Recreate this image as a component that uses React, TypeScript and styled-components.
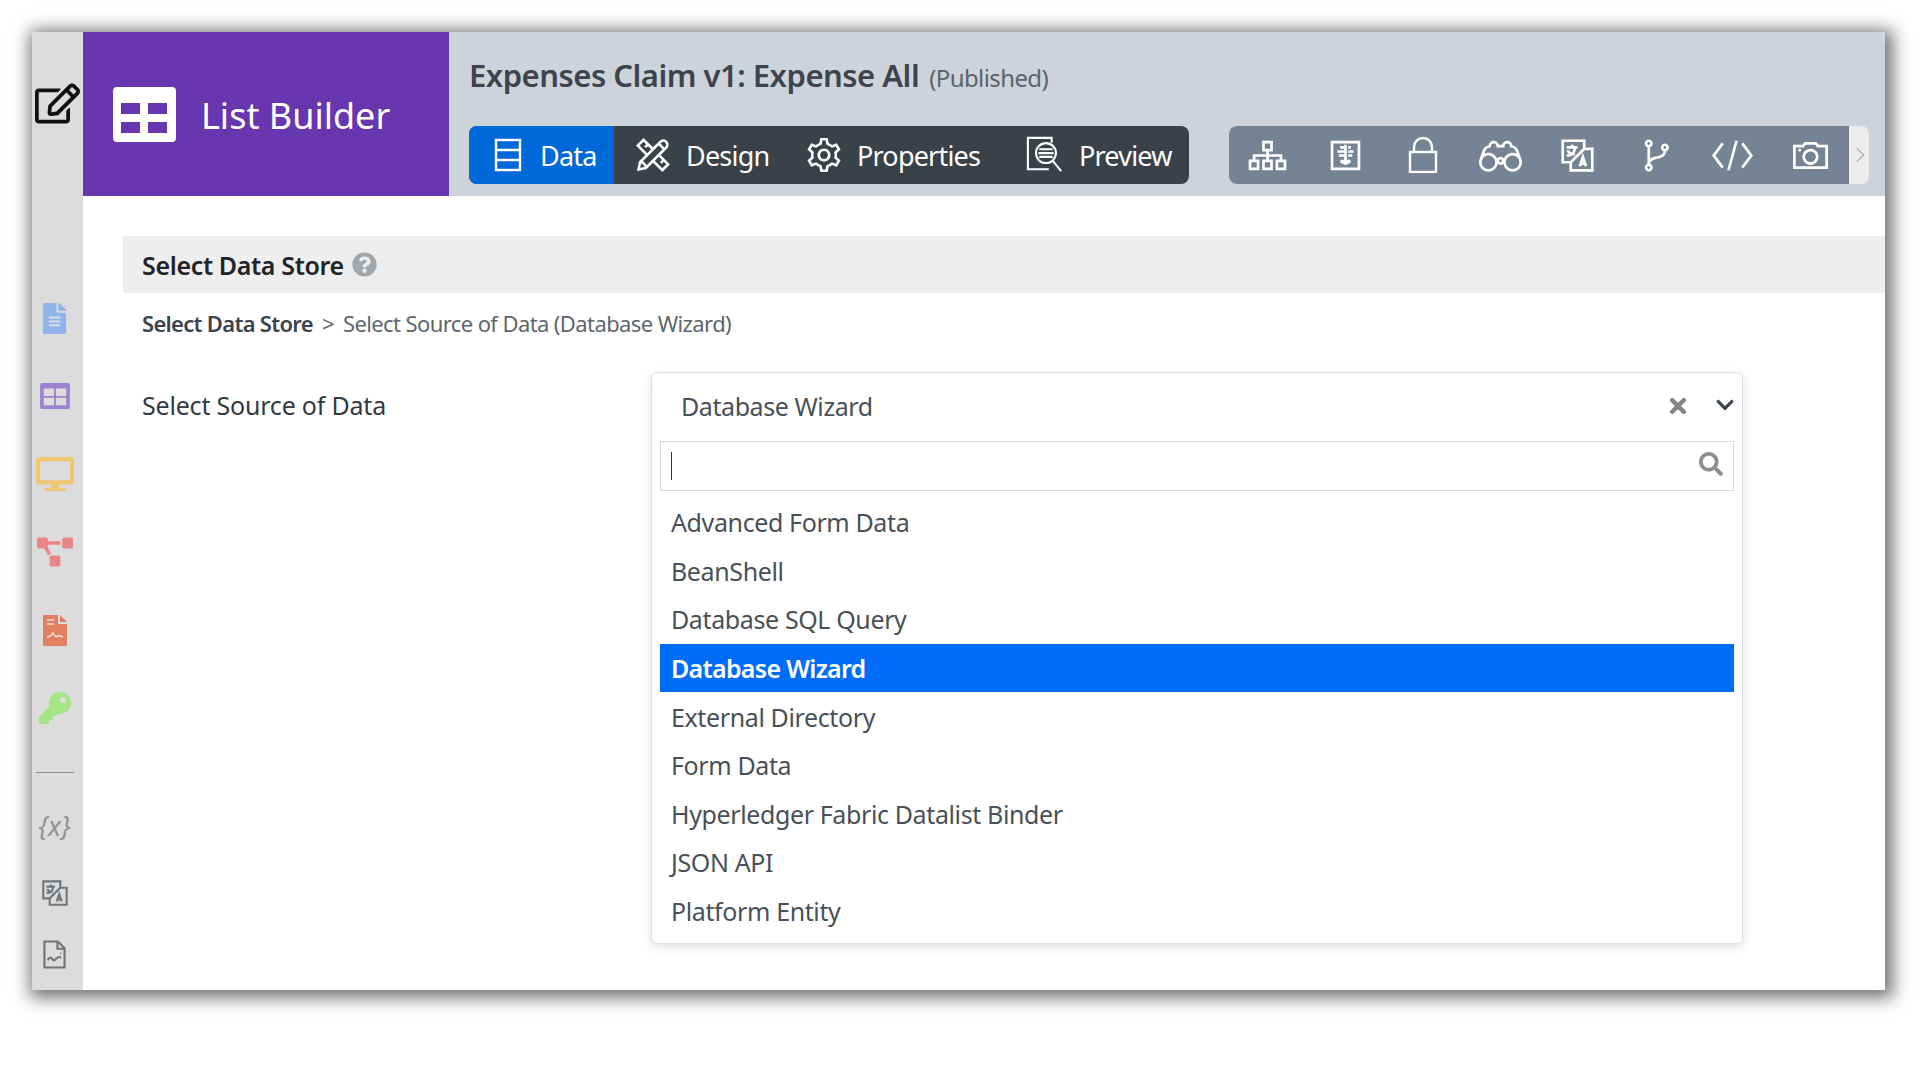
import React from 'react';
import styled, { createGlobalStyle } from 'styled-components';
import { FaFileAlt, FaKey, FaDesktop, FaProjectDiagram, FaQuestionCircle, FaChevronDown, FaTimes, FaSearch, FaRegEdit } from 'react-icons/fa';
import {
    LiaPencilRulerSolid, LiaCogSolid, LiaSitemapSolid, LiaXRaySolid, LiaBinocularsSolid,
    LiaLanguageSolid, LiaCodeBranchSolid, LiaCodeSolid, LiaCameraSolid, LiaAngleRightSolid
} from 'react-icons/lia';

const GlobalStyle = createGlobalStyle`
  html, body {
    margin: 0;
    padding: 0;
    background: #fff;
    font-family: "Noto Sans", "Open Sans", sans-serif;
  }
  * { box-sizing: border-box; }
`;

const Page = styled.div`
  width: 1920px;
  height: 1080px;
  padding: 32px 35px 90px 32px;
  overflow: hidden;
`;

const Window = styled.div`
  display: grid;
  grid-template-columns: 51px 1fr;
  height: 958px;
  background: #fff;
  box-shadow: 3px 3px 16px 5px rgba(0, 0, 0, 0.55);
`;

const Rail = styled.div`
  display: flex;
  flex-direction: column;
  align-items: center;
  background: #dcdcdc;
  padding: 49px 6px 0 0;
  min-height: 0;
`;

const RailEdit = styled.div`
  display: flex;
  align-items: center;
  height: 44px;
  margin: 0 0 171px 5px;
  font-size: 45px;
  color: #111;
`;

const RailItem = styled.div<{ $color: string; $size?: number; $gap?: number }>`
  display: flex;
  align-items: center;
  justify-content: center;
  height: 44px;
  margin-bottom: ${p => (p.$gap === undefined ? 34 : p.$gap)}px;
  color: ${p => p.$color};
  font-size: ${p => p.$size || 30}px;
`;

const RailRule = styled.div`
  width: 38px;
  height: 1px;
  background: #8a8d90;
  margin: 8px 0 30px;
`;

const RailVar = styled(RailItem)`
  font-style: italic;
  font-size: 27px;
  font-family: "Noto Sans", sans-serif;
`;

const Main = styled.div`
  display: flex;
  flex-direction: column;
  min-width: 0;
`;

const Header = styled.div`
  display: flex;
  height: 164px;
  background: #ccd3da;
`;

const Brand = styled.div`
  display: flex;
  flex: none;
  align-items: center;
  width: 366px;
  padding-left: 30px;
  gap: 25px;
  background: #6836ae;
  color: #fff;
  font-size: 36px;
`;

const BrandLogo = styled.svg`
  width: 63px;
  height: 55px;
`;

const BrandName = styled.span`
  padding-top: 2px;
`;

const HeaderBody = styled.div`
  flex: 1;
  min-width: 0;
  padding: 22px 0 0 20px;
`;

const Title = styled.div`
  display: flex;
  align-items: baseline;
  height: 47px;
  gap: 10px;
  font-size: 31px;
  font-weight: 600;
  color: #3d444b;
  letter-spacing: -0.5px;
`;

const TitleStatus = styled.span`
  font-size: 24px;
  font-weight: 400;
  color: #5b636b;
  letter-spacing: -0.6px;
`;

const Toolbars = styled.div`
  display: flex;
  margin-top: 25px;
  gap: 40px;
`;

const Tabs = styled.div`
  display: flex;
  flex: none;
  width: 720px;
  height: 58px;
  border-radius: 8px;
  background: #3a4249;
  overflow: hidden;
`;

const Tab = styled.div<{ $active?: boolean; $width: number; $pad: number; $gap: number }>`
  display: flex;
  align-items: center;
  flex: none;
  width: ${p => p.$width}px;
  padding-left: ${p => p.$pad}px;
  gap: ${p => p.$gap}px;
  background: ${p => (p.$active ? '#0069d9' : 'transparent')};
  color: #fff;
  font-size: 27px;
  letter-spacing: -0.8px;
  svg { flex: none; }
`;

const Tools = styled.div`
  display: flex;
  flex: none;
  width: 640px;
  height: 58px;
  border-radius: 8px;
  background: #ededed;
  overflow: hidden;
`;

const ToolList = styled.div`
  display: grid;
  grid-template-columns: repeat(8, 1fr);
  align-items: center;
  justify-items: center;
  width: 620px;
  background: #748494;
  color: #fff;
  font-size: 43px;
`;

const ToolMore = styled.div`
  display: flex;
  flex: 1;
  align-items: center;
  justify-content: center;
  color: #a9adb1;
  font-size: 20px;
`;

const Content = styled.div`
  flex: 1;
  padding: 40px 0 0 40px;
`;

const SectionBar = styled.div`
  display: flex;
  align-items: center;
  height: 57px;
  padding-left: 19px;
  gap: 8px;
  background: #eee;
  color: #212529;
  font-size: 25px;
  font-weight: 600;
  letter-spacing: -0.35px;
  svg { color: #a2a7ac; font-size: 25px; }
`;

const Crumbs = styled.div`
  padding: 15px 0 0 19px;
  height: 79px;
  color: #5e666d;
  font-size: 22px;
  letter-spacing: -0.6px;
  b { color: #3d444b; font-weight: 600; letter-spacing: -0.7px; }
`;

const CrumbSep = styled.span`
  margin: 0 9px;
`;

const Field = styled.div`
  display: flex;
  padding-left: 19px;
`;

const FieldLabel = styled.div`
  width: 509px;
  padding-top: 16px;
  color: #343a40;
  font-size: 25px;
  letter-spacing: -0.2px;
`;

const Select = styled.div`
  width: 1092px;
  height: 572px;
  background: #fff;
  border: 1px solid #dce1e6;
  border-radius: 6px;
  box-shadow: 0 3px 10px rgba(60, 70, 90, 0.16);
`;

const SelectHead = styled.div`
  display: flex;
  align-items: center;
  height: 68px;
  padding: 0 7px 3px 29px;
  color: #495057;
  font-size: 25px;
  letter-spacing: -0.42px;
`;

const SelectValue = styled.span`
  flex: 1;
`;

const Clear = styled.span`
  display: flex;
  margin-right: 25px;
  color: #808488;
  font-size: 24px;
`;

const Caret = styled.span`
  display: flex;
  margin-bottom: 2px;
  color: #3d454d;
  font-size: 20px;
`;

const SearchBox = styled.div`
  display: flex;
  align-items: center;
  justify-content: space-between;
  height: 50px;
  margin: 0 8px 7px 8px;
  padding: 0 10px 4px 10px;
  border: 1px solid #d5dae0;
  color: #8c8f92;
  font-size: 24px;
`;

const Cursor = styled.div`
  width: 1px;
  height: 28px;
  margin-top: 4px;
  background: #333;
`;

const Options = styled.div`
  margin: 0 8px;
`;

const Option = styled.div<{ $selected?: boolean }>`
  display: flex;
  align-items: center;
  height: 48.6px;
  padding-left: 11px;
  background: ${p => (p.$selected ? '#006cfa' : 'transparent')};
  color: ${p => (p.$selected ? '#fff' : '#495057')};
  font-size: 25px;
  font-weight: ${p => (p.$selected ? 600 : 400)};
  letter-spacing: ${p => (p.$selected ? '-0.7px' : '-0.38px')};
`;

const options = ['Advanced Form Data', 'BeanShell', 'Database SQL Query', 'Database Wizard', 'External Directory', 'Form Data', 'Hyperledger Fabric Datalist Binder', 'JSON API', 'Platform Entity'];

const GridIcon = ({ color }: { color: string }) => (
    <svg width="32" height="28" viewBox="0 0 34 30">
        <path fill={color} fillRule="evenodd" d="M3 1h28a2 2 0 0 1 2 2v24a2 2 0 0 1-2 2H3a2 2 0 0 1-2-2V3a2 2 0 0 1 2-2zM5 7v8h11V7zM18 7v8h11V7zM5 17v8h11v-8zM18 17v8h11v-8z"/>
    </svg>
);

const DataIcon = () => (
    <svg width="28" height="34" viewBox="0 0 28 34" fill="none" stroke="#fff" strokeWidth="2.4">
        <rect x="2" y="2" width="24" height="30"/>
        <path d="M2 12h24M2 22h24"/>
    </svg>
);

const PreviewIcon = () => (
    <svg width="38" height="38" viewBox="0 0 40 38" fill="none" stroke="#fff" strokeWidth="2.2">
        <path d="M27 6V1H2v33h22"/>
        <circle cx="21" cy="17" r="10.5"/>
        <path d="M14 13h14M13 17h16M14 21h14M28 25l9 11"/>
    </svg>
);

const LockIcon = () => (
    <svg width="34" height="36" viewBox="0 0 34 36" fill="none" stroke="#fff" strokeWidth="2.4">
        <rect x="4" y="15" width="26" height="20"/>
        <path d="M8 15V10a9 9 0 0 1 18 0v5"/>
    </svg>
);

const PdfIcon = () => (
    <svg width="24" height="31" viewBox="0 0 24 31">
        <path fill="#e07f62" d="M1 0h14v9h9v21a1 1 0 0 1-1 1H1a1 1 0 0 1-1-1V1a1 1 0 0 1 1-1zM17 0l7 7h-7z"/>
        <path fill="none" stroke="#f6dcd2" strokeWidth="1.6" d="M4 5h7M4 9h7M4 22c3 0 4-1 6-4 2 4 3 4 5 3s3 1 5 1"/>
    </svg>
);

const SketchFileIcon = () => (
    <svg width="23" height="29" viewBox="0 0 24 30" fill="none" stroke="#6f7478" strokeWidth="2.2">
        <path d="M1.5 1.5h14l7 7v20h-21zM15 2v7h7"/>
        <path d="M5 21c2-4 4-3 5-1s3 1 4-1 3-1 5-1M18 14h1"/>
    </svg>
);

export default function App() {
    return <Page>
        <GlobalStyle/>
        <Window>
            <Rail>
                <RailEdit><FaRegEdit/></RailEdit>
                <RailItem $color="#8fb3ea" $size={31}><FaFileAlt/></RailItem>
                <RailItem $color="#9d82d2"><GridIcon color="#9d82d2"/></RailItem>
                <RailItem $color="#f0c671" $size={38}><FaDesktop/></RailItem>
                <RailItem $color="#e98585" $size={36}><FaProjectDiagram/></RailItem>
                <RailItem $color="#e38167"><PdfIcon/></RailItem>
                <RailItem $color="#a6e584" $size={32}><FaKey/></RailItem>
                <RailRule/>
                <RailVar $color="#8f9396" $gap={24}>{'{x}'}</RailVar>
                <RailItem $color="#71767a" $size={34} $gap={17}><LiaLanguageSolid/></RailItem>
                <RailItem $color="#6f7478" $gap={0}><SketchFileIcon/></RailItem>
            </Rail>
            <Main>
                <Header>
                    <Brand>
                        <BrandLogo viewBox="0 0 63 55">
                            <path fill="#fff" fillRule="evenodd" d="M4 0h55a4 4 0 0 1 4 4v47a4 4 0 0 1-4 4H4a4 4 0 0 1-4-4V4a4 4 0 0 1 4-4zM8 16v11h19V16zM35 16v11h19V16zM8 35v11h19V35zM35 35v11h19V35z"/>
                        </BrandLogo>
                        <BrandName>List Builder</BrandName>
                    </Brand>
                    <HeaderBody>
                        <Title>Expenses Claim v1: Expense All <TitleStatus>(Published)</TitleStatus></Title>
                        <Toolbars>
                            <Tabs>
                                <Tab $active $width={145} $pad={25} $gap={18}><DataIcon/> Data</Tab>
                                <Tab $width={171} $pad={18} $gap={12}><LiaPencilRulerSolid size={42}/> Design</Tab>
                                <Tab $width={218} $pad={18} $gap={12}><LiaCogSolid size={42}/> Properties</Tab>
                                <Tab $width={186} $pad={23} $gap={15}><PreviewIcon/> Preview</Tab>
                            </Tabs>
                            <Tools>
                                <ToolList>
                                    <LiaSitemapSolid/>
                                    <LiaXRaySolid/>
                                    <LockIcon/>
                                    <LiaBinocularsSolid/>
                                    <LiaLanguageSolid/>
                                    <LiaCodeBranchSolid/>
                                    <LiaCodeSolid/>
                                    <LiaCameraSolid/>
                                </ToolList>
                                <ToolMore><LiaAngleRightSolid/></ToolMore>
                            </Tools>
                        </Toolbars>
                    </HeaderBody>
                </Header>
                <Content>
                    <SectionBar>Select Data Store <FaQuestionCircle/></SectionBar>
                    <Crumbs><b>Select Data Store</b><CrumbSep>&gt;</CrumbSep>Select Source of Data (Database Wizard)</Crumbs>
                    <Field>
                        <FieldLabel>Select Source of Data</FieldLabel>
                        <Select>
                            <SelectHead>
                                <SelectValue>Database Wizard</SelectValue>
                                <Clear><FaTimes/></Clear>
                                <Caret><FaChevronDown/></Caret>
                            </SelectHead>
                            <SearchBox><Cursor/><FaSearch/></SearchBox>
                            <Options>
                                {options.map(o => <Option key={o} $selected={o === 'Database Wizard'}>{o}</Option>)}
                            </Options>
                        </Select>
                    </Field>
                </Content>
            </Main>
        </Window>
    </Page>;
}
